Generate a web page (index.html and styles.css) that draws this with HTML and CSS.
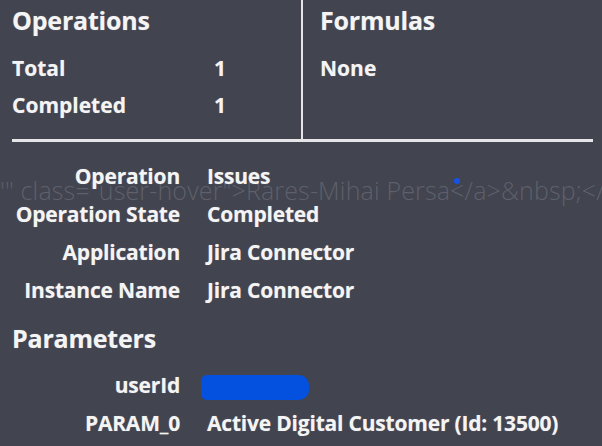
FILE: index.html
```html
<!DOCTYPE html>
<html>
<head>
<meta charset="utf-8">
<link rel="stylesheet" href="styles.css">
</head>
<body>
<div class="page">
  <div class="summary">
    <section class="panel panel-ops">
      <h2 class="title">Operations</h2>
      <div class="stat"><span class="stat-label">Total</span><span class="stat-value">1</span></div>
      <div class="stat"><span class="stat-label">Completed</span><span class="stat-value">1</span></div>
    </section>
    <section class="panel panel-formulas">
      <h2 class="title">Formulas</h2>
      <div class="stat"><span class="stat-label">None</span></div>
    </section>
  </div>
  <div class="details">
    <div class="ghost">'" class="user-hover"&gt;Rares-Mihai Persa&lt;/a&gt;&amp;nbsp;&lt;/l</div>
    <span class="dot"></span>
    <dl class="fields">
      <dt>Operation</dt><dd>Issues</dd>
      <dt>Operation State</dt><dd>Completed</dd>
      <dt>Application</dt><dd>Jira Connector</dd>
      <dt>Instance Name</dt><dd>Jira Connector</dd>
    </dl>
    <h2 class="title params-title">Parameters</h2>
    <dl class="fields params">
      <dt>userId</dt><dd><span class="redact"></span></dd>
      <dt>PARAM_0</dt><dd>Active Digital Customer (Id: 13500)</dd>
    </dl>
  </div>
</div>
</body>
</html>
```
FILE: styles.css
```css
html, body {
  margin: 0;
  padding: 0;
  background: #42444f;
}
body {
  width: 602px;
  height: 446px;
  overflow: hidden;
  font-family: "Open Sans", "Noto Sans", sans-serif;
  color: #f4f4f4;
  text-shadow: 0 0 1px rgba(255,255,255,0.35);
}
.page {
  position: relative;
}
.summary {
  display: grid;
  grid-template-columns: 291px 1fr;
  margin: 0 9px 0 12px;
  border-bottom: 3px solid #e6e6e8;
  height: 142px;
  box-sizing: border-box;
}
.panel-ops {
  border-right: 2px solid #e6e6e8;
}
.panel-formulas {
  padding-left: 17px;
}
.title {
  margin: 0;
  font-size: 25px;
  font-weight: 700;
  line-height: 40px;
  letter-spacing: -0.2px;
}
.stat {
  display: flex;
  font-size: 21px;
  font-weight: 700;
  line-height: 37px;
  letter-spacing: 0;
}
.stat:first-of-type {
  margin-top: 10px;
}
.stat-label {
  width: 202px;
}
.details {
  position: relative;
  padding: 15px 0 0 0;
}
.ghost {
  position: absolute;
  left: 0;
  top: 31px;
  white-space: nowrap;
  font-family: "Open Sans", sans-serif;
  font-weight: 300;
  font-size: 25px;
  line-height: 34px;
  letter-spacing: 0.15px;
  color: #5e606b;
  text-shadow: none;
}
.dot {
  position: absolute;
  left: 454px;
  top: 36px;
  width: 6px;
  height: 6px;
  border-radius: 50%;
  background: #1652e6;
}
.fields {
  position: relative;
  display: grid;
  grid-template-columns: 180px 1fr;
  column-gap: 27px;
  margin: 0;
  font-size: 21px;
  font-weight: 700;
  line-height: 38px;
  letter-spacing: -0.2px;
}
.fields dt {
  text-align: right;
}
.fields dd {
  margin: 0;
}
.params-title {
  padding-left: 12px;
  margin-top: 9px;
  line-height: 40px;
}
.params {
  margin-top: 8px;
}
.redact {
  display: inline-block;
  vertical-align: middle;
  width: 108px;
  height: 25px;
  margin-left: -6px;
  border-radius: 6px 10px 10px 6px;
  background: #0451e0;
}
```
